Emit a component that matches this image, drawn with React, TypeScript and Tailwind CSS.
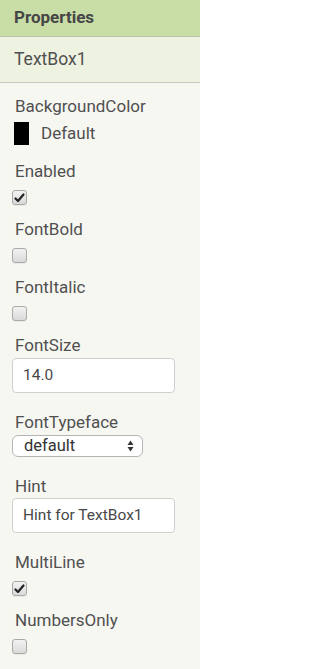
import React from "react";

function Check({ checked }: { checked?: boolean }) {
  return (
    <div className="w-[15px] h-[15px] ml-[12px] rounded-[3px] border border-[#a9a9a9] bg-gradient-to-b from-[#f2f2f2] to-[#dadada] flex items-center justify-center shadow-[0_1px_0_rgba(0,0,0,0.05)]">
      {checked && (
        <svg width="11" height="10" viewBox="0 0 11 10">
          <path d="M1.5 5.5 L4 8 L9.5 1.5" fill="none" stroke="#222" strokeWidth="2.2" strokeLinecap="round" strokeLinejoin="round" />
        </svg>
      )}
    </div>
  );
}

function Label({ children }: { children: React.ReactNode }) {
  return <div className="h-[20px] leading-[20px] pl-[15px] text-[17px] text-[#505050]">{children}</div>;
}

export default function App() {
  return (
    <div className="w-[200px] h-[669px] bg-[#f7f7f2] overflow-hidden" style={{ fontFamily: "Roboto, 'Liberation Sans', sans-serif" }}>
      <div className="h-[37px] bg-[#c9dda6] border-b border-[#b9c3ab] flex items-center pl-[14px] text-[17px] font-bold text-[#464646]">
        Properties
      </div>
      <div className="h-[46px] bg-[#eef2e0] border-b border-[#c8c8c0] flex items-center pl-[14px] text-[17.5px] text-[#505050]">
        TextBox1
      </div>
      <div className="pt-[13px]">
        <Label>BackgroundColor</Label>
        <div className="mt-[6px] h-[23px] flex items-center">
          <div className="w-[15px] h-[23px] ml-[14px] bg-black" />
          <span className="ml-[12px] leading-[23px] text-[17px] text-[#505050]">Default</span>
        </div>

        <div className="mt-[16px]"><Label>Enabled</Label></div>
        <div className="mt-[9px]"><Check checked /></div>

        <div className="mt-[14px]"><Label>FontBold</Label></div>
        <div className="mt-[9px]"><Check /></div>

        <div className="mt-[14px]"><Label>FontItalic</Label></div>
        <div className="mt-[9px]"><Check /></div>

        <div className="mt-[14px]"><Label>FontSize</Label></div>
        <div className="mt-[3px] ml-[12px] w-[163px] h-[35px] bg-white border border-[#cfcfcf] rounded-[4px] flex items-center pl-[10px] text-[15.5px] text-[#484848]">
          14.0
        </div>

        <div className="mt-[19px]"><Label>FontTypeface</Label></div>
        <div className="mt-[3px] ml-[12px] w-[131px] h-[22px] bg-white border border-[#b5b5b5] rounded-[6px] flex items-center justify-between pl-[11px] pr-[8px] text-[16.5px] leading-[20px] text-[#333]">
          <span>default</span>
          <svg width="7" height="12" viewBox="0 0 7 12">
            <path d="M3.5 0.5 L6.5 5 L0.5 5 Z" fill="#333" />
            <path d="M3.5 11.5 L6.5 7 L0.5 7 Z" fill="#333" />
          </svg>
        </div>

        <div className="mt-[19px]"><Label>Hint</Label></div>
        <div className="mt-[2px] ml-[12px] w-[163px] h-[35px] bg-white border border-[#cfcfcf] rounded-[4px] flex items-center pl-[10px] text-[15.5px] text-[#484848]">
          Hint for TextBox1
        </div>

        <div className="mt-[19px]"><Label>MultiLine</Label></div>
        <div className="mt-[9px]"><Check checked /></div>

        <div className="mt-[14px]"><Label>NumbersOnly</Label></div>
        <div className="mt-[9px]"><Check /></div>
      </div>
    </div>
  );
}
